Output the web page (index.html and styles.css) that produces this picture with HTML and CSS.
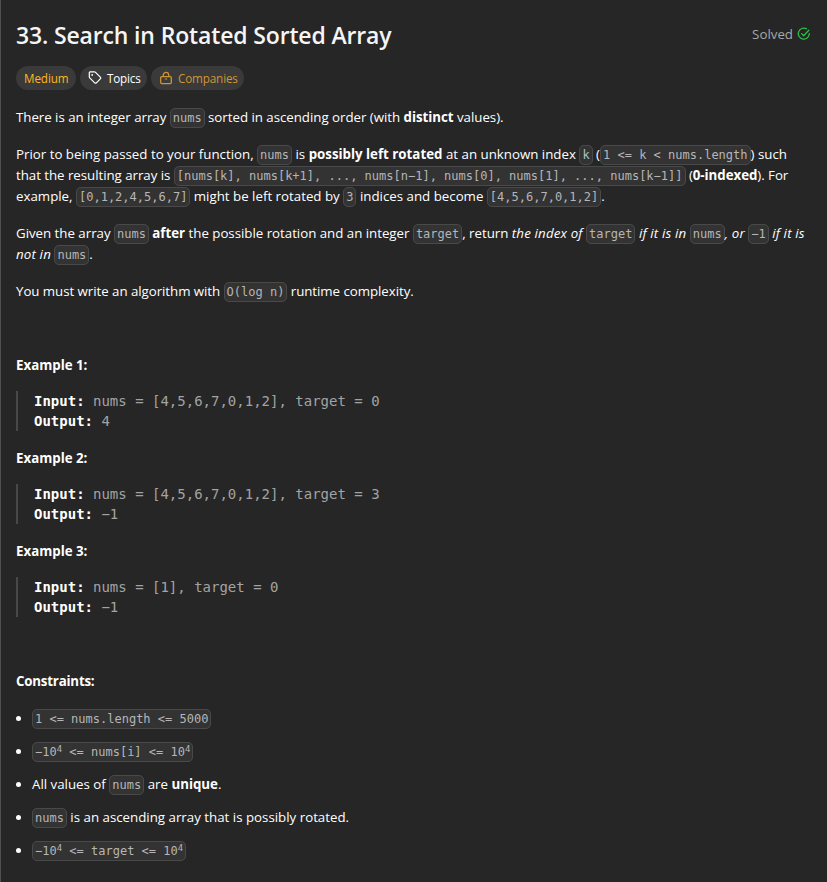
FILE: index.html
```html
<!DOCTYPE html>
<html lang="en">
<head>
<meta charset="utf-8">
<title>33. Search in Rotated Sorted Array</title>
<link rel="stylesheet" href="styles.css">
</head>
<body>
<main class="panel">
  <header class="head">
    <h1 class="title">33. Search in Rotated Sorted Array</h1>
    <div class="solved">Solved
      <svg width="14" height="14" viewBox="0 0 14 14" fill="none" stroke="#28c244" stroke-width="1.3" stroke-linecap="round" stroke-linejoin="round"><path d="M9.300 1.700A5.500 5.500 0 1 0 12.300 6.600"/><path d="M4.600 6.600l2.100 2.100 5.100-5.400"/></svg>
    </div>
  </header>
  <div class="tags">
    <span class="tag medium">Medium</span>
    <span class="tag topics"><svg width="14" height="14" viewBox="0 0 14 14" fill="none" stroke="currentColor" stroke-width="1.2" stroke-linejoin="round"><path d="M1.300 2.100V5.800c0 .4.1.7.4 1l5 5c.5.5 1.200.5 1.700 0l3.900-3.900c.5-.5.5-1.200 0-1.700l-5-5c-.2-.2-.5-.3-.9-.3H2.200c-.6 0-.9.4-.9 1.200z"/><circle cx="4.200" cy="3.900" r=".9" fill="currentColor" stroke="none"/></svg>Topics</span>
    <span class="tag companies"><svg width="14" height="14" viewBox="0 0 14 14" fill="none" stroke="currentColor" stroke-width="1.3" stroke-linejoin="round"><rect x="1.700" y="5.600" width="10.600" height="7" rx="1"/><path d="M4.300 5.600V4a2.700 2.700 0 0 1 5.400 0v1.600"/><path d="M5.800 8h2.400" stroke-width="1"/></svg>Companies</span>
  </div>
  <section class="body">
    <p class="l1">There is an integer array <code>nums</code> sorted in ascending order (with <b>distinct</b> values).</p>
    <p><span class="l2">Prior to being passed to your function, <code>nums</code> is <b>possibly left rotated</b> at an unknown index <code class="cyan">k</code> (<code>1 &lt;= k &lt; nums.length</code>) such</span><br><span class="l3">that the resulting array is <code>[nums[k], nums[k+1], ..., nums[n−1], nums[0], nums[1], ..., nums[k−1]]</code> (<b>0-indexed</b>). For</span><br><span class="l4">example, <code>[0,1,2,4,5,6,7]</code> might be left rotated by <code>3</code> indices and become <code>[4,5,6,7,0,1,2]</code>.</span></p>
    <p><span class="l5">Given the array <code>nums</code> <b>after</b> the possible rotation and an integer <code>target</code>, return <i>the index of</i> <code>target</code> <i>if it is in</i> <code>nums</code><i>, or</i> <code>−1</code> <i>if it is</i></span><br><span class="l6"><i>not in</i> <code>nums</code>.</span></p>
    <p class="l7">You must write an algorithm with <code>O(log n)</code> runtime complexity.</p>
    <p>&nbsp;</p>
    <p class="example"><b>Example 1:</b></p>
    <pre><b>Input:</b> nums = [4,5,6,7,0,1,2], target = 0
<b>Output:</b> 4</pre>
    <p class="example"><b>Example 2:</b></p>
    <pre><b>Input:</b> nums = [4,5,6,7,0,1,2], target = 3
<b>Output:</b> −1</pre>
    <p class="example"><b>Example 3:</b></p>
    <pre><b>Input:</b> nums = [1], target = 0
<b>Output:</b> −1</pre>
    <p>&nbsp;</p>
    <p class="constraints"><b>Constraints:</b></p>
    <ul>
      <li><code>1 &lt;= nums.length &lt;= 5000</code></li>
      <li><code>−10<sup>4</sup> &lt;= nums[i] &lt;= 10<sup>4</sup></code></li>
      <li>All values of <code>nums</code> are <b>unique</b>.</li>
      <li><code>nums</code> is an ascending array that is possibly rotated.</li>
      <li><code>−10<sup>4</sup> &lt;= target &lt;= 10<sup>4</sup></code></li>
    </ul>
  </section>
</main>
</body>
</html>
```
FILE: styles.css
```css
* { box-sizing: border-box; }
body {
  margin: 0;
  background: #262626;
  color: #fff;
  font: 13.3px/21px "Open Sans", "Noto Sans", sans-serif;
}
.panel {
  height: 882px;
  padding: 19px 16px 0 15px;
  border-left: 1px solid #505050;
  overflow: hidden;
  white-space: nowrap;
}
.head { display: flex; justify-content: space-between; height: 32px; }
.title {
  margin: 0;
  color: #f5f5f5;
  font-size: 23px;
  line-height: 32px;
  font-weight: 600;
  letter-spacing: -0.15px;
}
.solved {
  display: flex;
  align-items: center;
  gap: 4px;
  height: 30px;
  color: #a8a8a8;
}
.tags { display: flex; gap: 4px; margin-top: 15px; }
.tag {
  display: flex;
  align-items: center;
  gap: 4px;
  height: 24px;
  padding: 1px 8px 0;
  border-radius: 12px;
  background: #3a3a3a;
  font-size: 11.7px;
}
.tag svg { position: relative; top: -1px; flex: none; }
.medium { width: 60px; color: #ffb81c; letter-spacing: -0.1px; }
.topics { width: 67px; gap: 5px; letter-spacing: -0.2px; }
.companies { width: 93px; gap: 4px; color: #d09532; letter-spacing: -0.15px; }
.companies svg { margin-left: 0; margin-right: 1px; }
.companies { padding-left: 8px; }
.body { padding-top: 17px; }
p { margin: 0 0 16px; }
b { font-weight: 700; }
code {
  padding: 2px;
  border: 1px solid #494949;
  border-radius: 5px;
  background: #333;
  color: #b6b6b6;
  font: 12px/14px "DejaVu Sans Mono", monospace;
  letter-spacing: 0;
}
i { letter-spacing: 0.16px; }
.cyan { color: #a9c3c6; }
.l1 { letter-spacing: -0.03px; }
.l3 { letter-spacing: -0.04px; }
.l5 { letter-spacing: -0.02px; }
.l7 { letter-spacing: -0.05px; }
.constraints { letter-spacing: -0.2px; }
.example { margin-bottom: 15px; }
pre {
  margin: 0 0 17px;
  padding-left: 16px;
  border-left: 2px solid #484848;
  color: #a3a3a3;
  font: 14px/20px "DejaVu Sans Mono", monospace;
}
pre b { color: #fff; }
ul { margin: 0; padding: 0 0 0 16px; list-style: disc; }
li { height: 21px; margin-bottom: 12px; }
sup { font-size: 9px; line-height: 0; vertical-align: 4px; }
```
